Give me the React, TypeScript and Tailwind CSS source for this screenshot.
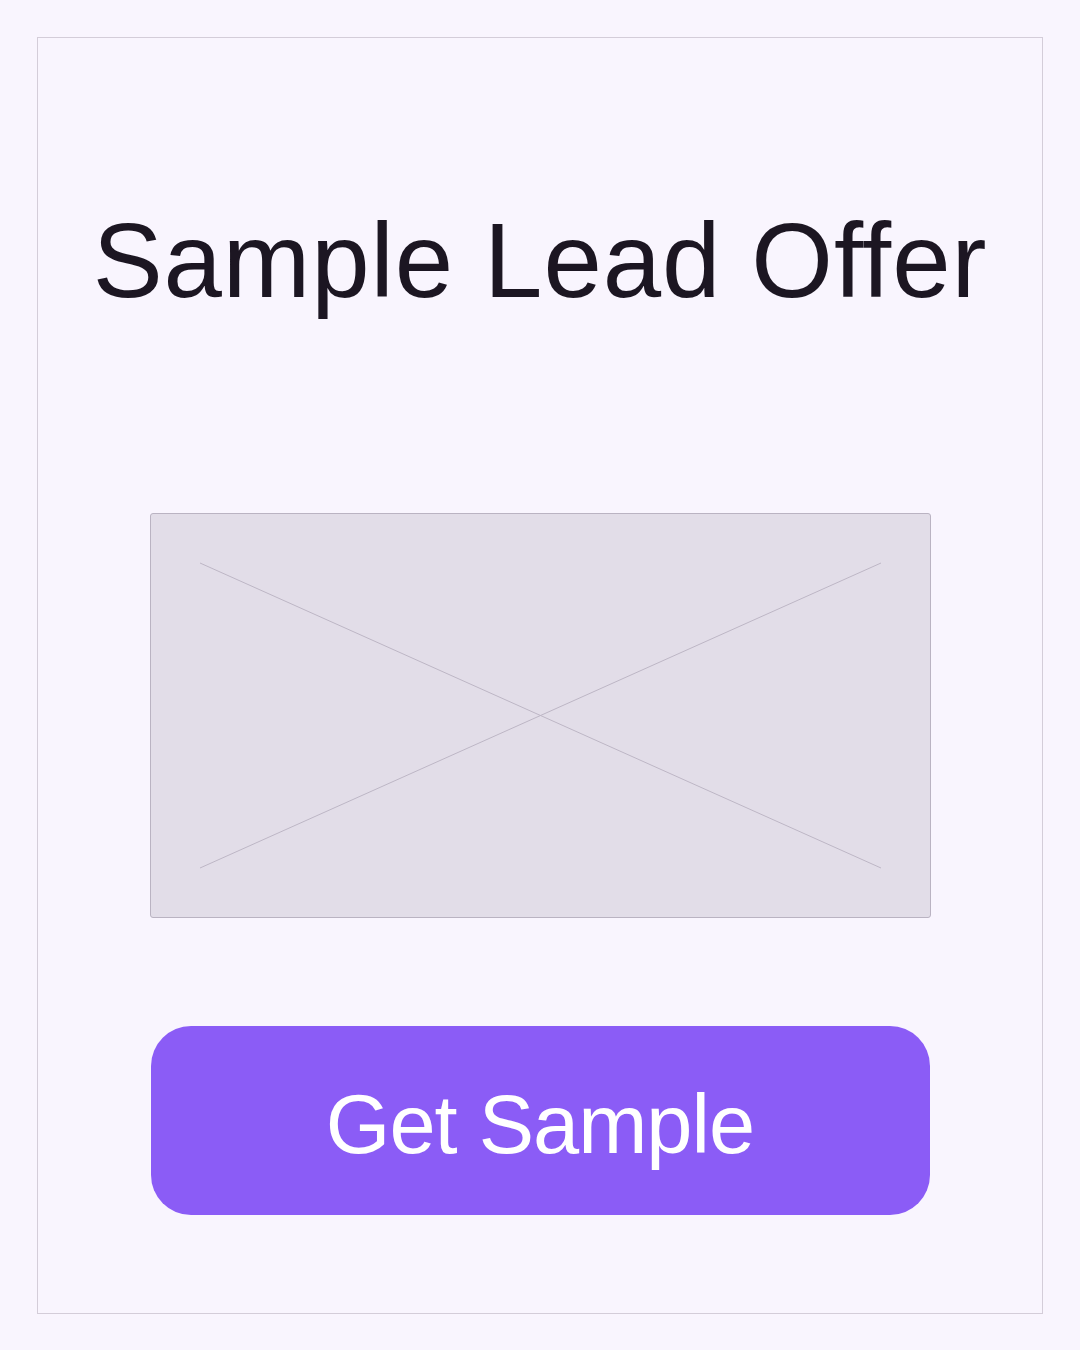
import React from "react";

const App = () => {
  return (
    <div
      className="min-h-[1350px] w-full bg-[#f9f5fe] p-[37px]"
      style={{ fontFamily: '"Liberation Sans", Arial, sans-serif' }}
    >
      <div className="flex h-[1277px] flex-col items-center border border-[#d4cdd9] bg-[#f9f5fe]">
        {/* Title */}
        <h1 className="mt-[170px] text-[105px] leading-none font-normal tracking-[0.9px] text-[#1c1622]">
          Sample Lead Offer
        </h1>

        {/* Image placeholder */}
        <div className="relative mt-[200px] h-[405px] w-[781px] rounded-[3px] border border-[#bab3c2] bg-[#e2dde8]">
          <svg
            className="absolute inset-0 h-full w-full"
            viewBox="0 0 779 403"
            preserveAspectRatio="none"
          >
            <line x1="49" y1="49" x2="730" y2="354" stroke="#bdb6c5" strokeWidth="1" />
            <line x1="730" y1="49" x2="49" y2="354" stroke="#bdb6c5" strokeWidth="1" />
          </svg>
        </div>

        {/* CTA */}
        <button className="mt-[108px] flex h-[189px] w-[779px] items-center justify-center rounded-[40px] bg-[#8b5cf6] pt-[8px] text-[83px] leading-none tracking-[-1px] text-white">
          Get Sample
        </button>
      </div>
    </div>
  );
};

export default App;
